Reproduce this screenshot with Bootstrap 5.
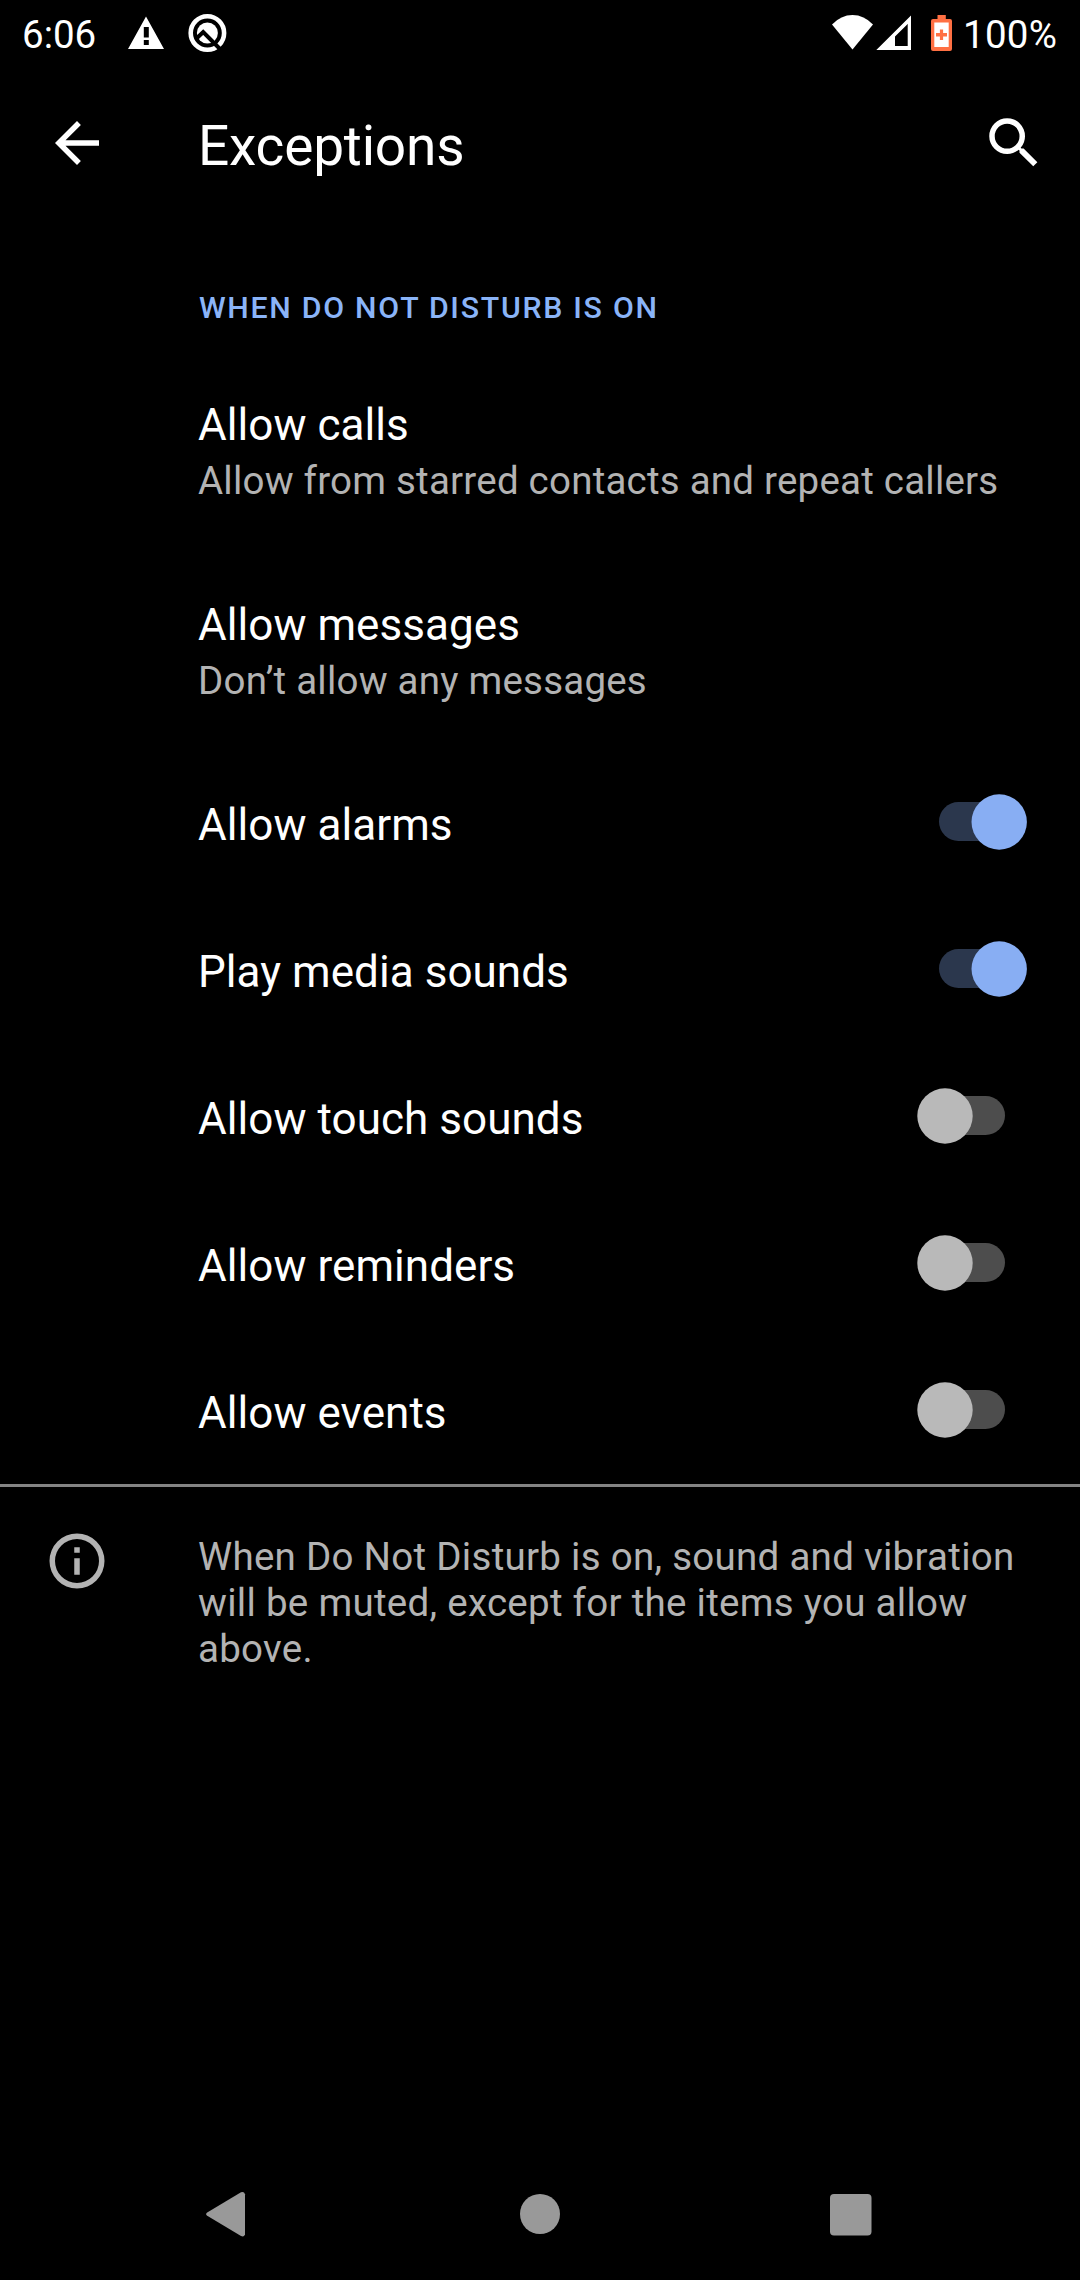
<!DOCTYPE html>
<html lang="en" data-bs-theme="dark">
<head>
<meta charset="utf-8">
<meta name="viewport" content="width=device-width, initial-scale=1">
<title>Exceptions</title>
<link href="https://cdn.jsdelivr.net/npm/bootstrap@5.3.0/dist/css/bootstrap.min.css" rel="stylesheet">
<style>
  body { background: #000; color: #fff; font-family: Roboto, sans-serif; overflow: hidden; }
  svg { display: block; flex: none; }
  .screen { width: 1080px; height: 2280px; }
  .status-bar { height: 66px; padding: 12px 22px 0; font-size: 38.5px; line-height: 45px; }
  .status-bar svg { height: 66px; margin-top: -12px; }
  .status-left { width: 74px; }
  .status-pct { letter-spacing: .3px; width: 95px; }
  .app-bar { height: 154px; padding: 44px 33px 0 44px; }
  .app-title { font-size: 55px; line-height: 64px; letter-spacing: -.2px; margin: 4px 0 0 88px; font-weight: 400; }
  .section-label { height: 129px; padding: 70px 0 0 198.9px; font-size: 30.25px; line-height: 36px; font-weight: 500; letter-spacing: 1.74px; color: #8ab4f8; }
  .pref { height: 147px; padding: 0 42px 0 198px; background: none; border: 0; border-radius: 0; color: #fff; }
  .pref-tall { height: 200px; }
  .pref-name { font-size: 44px; line-height: 52px; letter-spacing: .05px; padding-top: 50px; }
  .pref-note { font-size: 38.5px; line-height: 45px; letter-spacing: .22px; color: #b3b3b3; padding-top: 7px; }
  .rule { height: 3px; background: #848484; }
  .foot { padding: 41px 33px 0 44px; color: #b3b3b3; }
  .foot p { width: 830px; margin: 6px 0 0 88px; font-size: 38.5px; line-height: 46px; letter-spacing: .28px; }
  .nav-keys { height: 132px; padding: 0 198px; }
</style>
</head>
<body>
<main class="screen d-flex flex-column">
  <header class="status-bar d-flex align-items-start">
    <span class="status-left">6:06</span>
    <svg width="140" height="66" viewBox="96 0 140 66">
      <path fill="#fff" fill-rule="evenodd" d="M146 16.5 164 49H128ZM143.8 27V37.5H148.8V27ZM143.8 40V45H148.8V40Z"/>
      <circle cx="207.4" cy="33" r="16.7" fill="none" stroke="#fff" stroke-width="4.6"/>
      <circle cx="207.4" cy="33" r="10.5" fill="#fff"/>
      <path d="M197 38 203.2 32 219.5 48.5" fill="none" stroke="#000" stroke-width="4"/>
    </svg>
    <svg class="ms-auto" width="134" height="66" viewBox="829 0 134 66">
      <path fill="#fff" d="M832 24.5Q841 15 852.5 15T873 24.5L852.5 49.5Z"/>
      <path fill="#fff" fill-rule="evenodd" d="M911 15.5V50H876.3ZM907.7 24 895 36.5V46H907.7Z"/>
      <path fill="#ff7043" d="M937.5 15h8.3v4h4.2q2 0 2 2V49q0 2-2 2H933q-2 0-2-2V21q0-2 2-2h4.5Z"/>
      <path fill="#fff" d="M934.3 22.5h14.4V47H934.3Z"/>
      <path fill="#ff7043" d="M939.9 29.5h3.2v3.6h3.9v3.3h-3.9V40h-3.2v-3.6h-3.9v-3.3h3.9Z"/>
    </svg>
    <span class="status-pct">100%</span>
  </header>

  <nav class="app-bar d-flex align-items-start">
    <svg width="66" height="66" viewBox="0 0 24 24" fill="#fff"><path d="M20 11H7.83l5.59-5.59L12 4l-8 8 8 8 1.41-1.41L7.83 13H20v-2z"/></svg>
    <h1 class="app-title">Exceptions</h1>
    <svg class="ms-auto" width="66" height="66" viewBox="0 0 24 24" fill="#fff"><path d="M15.5 14h-.79l-.28-.27A6.47 6.47 0 0 0 16 9.5 6.5 6.5 0 1 0 9.5 16c1.61 0 3.09-.59 4.23-1.57l.27.28v.79l5 4.99L20.49 19l-4.99-5zm-6 0a4.5 4.5 0 1 1 0-9 4.5 4.5 0 0 1 0 9z"/></svg>
  </nav>

  <div class="section-label">WHEN DO NOT DISTURB IS ON</div>

  <div class="list-group list-group-flush">
    <div class="list-group-item pref pref-tall">
      <div class="pref-name">Allow calls</div>
      <div class="pref-note">Allow from starred contacts and repeat callers</div>
    </div>
    <div class="list-group-item pref pref-tall">
      <div class="pref-name">Allow messages</div>
      <div class="pref-note">Don’t allow any messages</div>
    </div>
    <div class="list-group-item pref d-flex justify-content-between">
      <div class="pref-name">Allow alarms</div>
      <svg width="132" height="147"><rect x="33" y="53" width="66" height="39" rx="19.5" fill="#2b374d"/><circle cx="93.2" cy="73" r="27.7" fill="#88aef3"/></svg>
    </div>
    <div class="list-group-item pref d-flex justify-content-between">
      <div class="pref-name">Play media sounds</div>
      <svg width="132" height="147"><rect x="33" y="53" width="66" height="39" rx="19.5" fill="#2b374d"/><circle cx="93.2" cy="73" r="27.7" fill="#88aef3"/></svg>
    </div>
    <div class="list-group-item pref d-flex justify-content-between">
      <div class="pref-name">Allow touch sounds</div>
      <svg width="132" height="147"><rect x="33" y="53" width="66" height="39" rx="19.5" fill="#4d4d4d"/><circle cx="39" cy="73" r="27.7" fill="#b9b9b9"/></svg>
    </div>
    <div class="list-group-item pref d-flex justify-content-between">
      <div class="pref-name">Allow reminders</div>
      <svg width="132" height="147"><rect x="33" y="53" width="66" height="39" rx="19.5" fill="#4d4d4d"/><circle cx="39" cy="73" r="27.7" fill="#b9b9b9"/></svg>
    </div>
    <div class="list-group-item pref d-flex justify-content-between">
      <div class="pref-name">Allow events</div>
      <svg width="132" height="147"><rect x="33" y="53" width="66" height="39" rx="19.5" fill="#4d4d4d"/><circle cx="39" cy="73" r="27.7" fill="#b9b9b9"/></svg>
    </div>
  </div>

  <div class="rule"></div>
  <footer class="foot d-flex align-items-start">
    <svg width="66" height="66" viewBox="0 0 24 24" fill="#b3b3b3"><path d="M11 7h2v2h-2zm0 4h2v6h-2zm1-9a10 10 0 1 0 0 20 10 10 0 0 0 0-20zm0 18a8 8 0 1 1 0-16 8 8 0 0 1 0 16z"/></svg>
    <p>When Do Not Disturb is on, sound and vibration will be muted, except for the items you allow above.</p>
  </footer>

  <div class="nav-keys d-flex justify-content-between mt-auto">
    <svg width="60" height="132" fill="#999"><path d="M47 46.2V86.3Q46 89.500 43 88L9.200 67.800Q7 66.200 9.200 64.500L43 44.300Q46 43 47 46.200Z"/></svg>
    <svg width="60" height="132" fill="#999"><circle cx="30" cy="66" r="20"/></svg>
    <svg width="60" height="132" fill="#999"><rect x="8" y="46" width="41.500" height="41.500" rx="4"/></svg>
  </div>
</main>
<script src="https://cdn.jsdelivr.net/npm/bootstrap@5.3.0/dist/js/bootstrap.bundle.min.js"></script>
</body>
</html>
